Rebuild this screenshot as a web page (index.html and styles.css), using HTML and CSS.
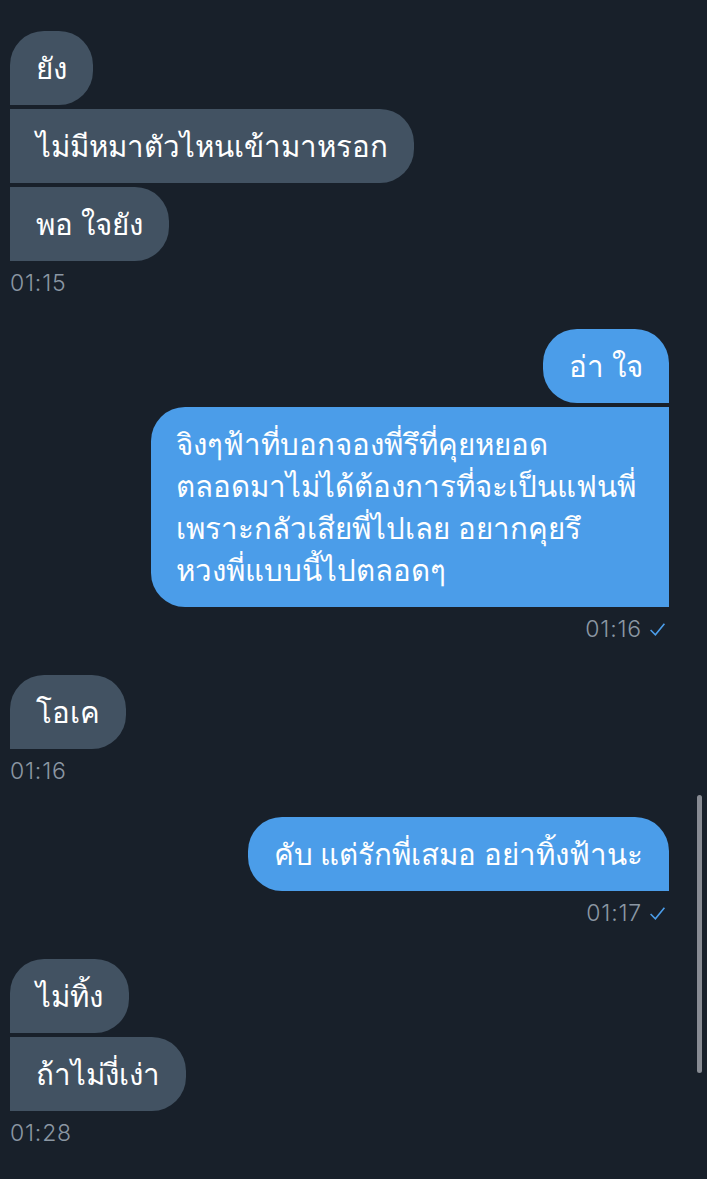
FILE: index.html
```html
<!DOCTYPE html>
<html lang="th">
<head>
    <meta charset="UTF-8">
    <meta name="viewport" content="width=device-width, initial-scale=1.0">
    <title>Messages</title>
    <link rel="stylesheet" href="styles.css">
</head>
<body>
    <div class="chat">
        <div class="group received">
            <div class="bubble first">ยัง</div>
            <div class="bubble middle">ไม่มีหมาตัวไหนเข้ามาหรอก</div>
            <div class="bubble last">พอ ใจยัง</div>
            <div class="time">01:15</div>
        </div>

        <div class="group sent">
            <div class="bubble first">อ่า ใจ</div>
            <div class="bubble last wide">จิงๆฟ้าที่บอกจองพี่รึที่คุยหยอด<br>ตลอดมาไม่ได้ต้องการที่จะเป็นแฟนพี่<br>เพราะกลัวเสียพี่ไปเลย อยากคุยรึ<br>หวงพี่แบบนี้ไปตลอดๆ</div>
            <div class="time">01:16 <svg class="check" viewBox="0 0 16 16"><polyline points="1.5,8.5 6,13 14.5,2.5"/></svg></div>
        </div>

        <div class="group received">
            <div class="bubble single">โอเค</div>
            <div class="time">01:16</div>
        </div>

        <div class="group sent">
            <div class="bubble single">คับ แต่รักพี่เสมอ อย่าทิ้งฟ้านะ</div>
            <div class="time">01:17 <svg class="check" viewBox="0 0 16 16"><polyline points="1.5,8.5 6,13 14.5,2.5"/></svg></div>
        </div>

        <div class="group received">
            <div class="bubble first">ไม่ทิ้ง</div>
            <div class="bubble last">ถ้าไม่งี่เง่า</div>
            <div class="time">01:28</div>
        </div>
    </div>

    <div class="scrollbar"></div>
</body>
</html>
```

FILE: styles.css
```css
body {
    margin: 0;
    padding: 0;
    background-color: #18202a;
    font-family: "Noto Sans", "DejaVu Sans", sans-serif;
    color: #fff;
    height: 1179px;
    overflow: hidden;
}
.chat {
    display: flex;
    flex-direction: column;
    gap: 34px;
    padding: 31px 38px 0 10px;
}
.group {
    display: flex;
    flex-direction: column;
    gap: 4px;
}
.received {
    align-items: flex-start;
}
.sent {
    align-items: flex-end;
}
.bubble {
    font-size: 29.5px;
    line-height: 42px;
    padding: 16px 26px;
    border-radius: 34px;
    max-width: 466px;
    white-space: nowrap;
}
.received .bubble {
    background-color: #425262;
}
.sent .bubble {
    background-color: #4b9de9;
}

/* corner shapes for grouped bubbles */
.received .first,
.received .single {
    border-bottom-left-radius: 0;
}
.received .middle,
.received .last {
    border-top-left-radius: 0;
    border-bottom-left-radius: 0;
}
.sent .first,
.sent .single {
    border-bottom-right-radius: 0;
}
.sent .last {
    border-top-right-radius: 0;
    border-bottom-right-radius: 0;
}
.sent .wide {
    width: 466px;
    padding-left: 25px;
    padding-right: 27px;
    border-radius: 34px 0 0 34px;
}

.time {
    margin-top: 6px;
    font-family: Inter, "Liberation Sans", sans-serif;
    font-size: 23px;
    font-weight: 300;
    letter-spacing: 0.8px;
    line-height: 24px;
    color: #8b97a3;
    display: flex;
    align-items: center;
    gap: 7px;
}
.sent .time {
    margin-right: 3px;
}
.check {
    width: 17px;
    height: 17px;
    fill: none;
    stroke: #4b9de9;
    stroke-width: 1.5;
}
.scrollbar {
    position: absolute;
    left: 697px;
    top: 795px;
    width: 5px;
    height: 278px;
    border-radius: 3px;
    background-color: #878b93;
}
```
